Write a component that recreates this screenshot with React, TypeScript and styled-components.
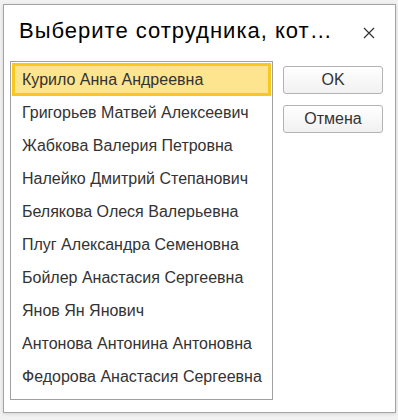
import React, { FC, useState } from 'react';
import styled, { createGlobalStyle } from 'styled-components';

const GlobalStyle = createGlobalStyle`
    html, body {
        margin: 0;
        padding: 0;
        background: #f2f2f2;
        font-family: Arial, "Liberation Sans", sans-serif;
    }
`;

const Page = styled.div`
    padding: 4px 3px;
`;

const Dialog = styled.div`
    box-sizing: border-box;
    width: 393px;
    height: 409px;
    background: #ffffff;
    border: 1px solid #a3a3a3;
    box-shadow: 0 1px 4px rgba(0, 0, 0, 0.12);
    display: flex;
    flex-direction: column;
`;

const Header = styled.div`
    height: 56px;
    display: flex;
    align-items: center;
    padding: 0 14px 5px 15px;
    box-sizing: border-box;
`;

const Title = styled.div`
    flex: 1;
    font-size: 22px;
    letter-spacing: 1px;
    color: #000;
    white-space: nowrap;
`;

const CloseButton = styled.button`
    width: 24px;
    height: 24px;
    border: none;
    background: transparent;
    padding: 0;
    margin: 5px 0 0 auto;
    display: flex;
    align-items: center;
    justify-content: center;
    cursor: pointer;
`;

const Body = styled.div`
    display: flex;
    align-items: flex-start;
    gap: 10px;
    padding: 0 0 0 6px;
`;

const List = styled.div`
    box-sizing: border-box;
    width: 263px;
    height: 339px;
    border: 1px solid #a0a0a0;
    padding: 1px;
    display: flex;
    flex-direction: column;
`;

const Row = styled.div<{ $selected?: boolean }>`
    box-sizing: border-box;
    height: 33px;
    flex-shrink: 0;
    display: flex;
    align-items: center;
    padding-left: ${(p) => (p.$selected ? '7px' : '10px')};
    font-size: 16px;
    color: #333333;
    white-space: nowrap;
    background: ${(p) => (p.$selected ? '#fde48f' : 'transparent')};
    border: ${(p) => (p.$selected ? '3px solid #f8c91c' : 'none')};
    cursor: default;
`;

const Buttons = styled.div`
    display: flex;
    flex-direction: column;
    gap: 11px;
    padding-top: 5px;
`;

const Button = styled.button`
    box-sizing: border-box;
    width: 100px;
    height: 28px;
    border: 1px solid #b3b3b3;
    border-radius: 3px;
    background: linear-gradient(#ffffff, #f1f1f1);
    font-family: Arial, "Liberation Sans", sans-serif;
    font-size: 16px;
    color: #333333;
    padding: 0;
    cursor: pointer;
`;

const employees = [
    'Курило Анна Андреевна',
    'Григорьев Матвей Алексеевич',
    'Жабкова Валерия Петровна',
    'Налейко Дмитрий Степанович',
    'Белякова Олеся Валерьевна',
    'Плуг Александра Семеновна',
    'Бойлер Анастасия Сергеевна',
    'Янов Ян Янович',
    'Антонова Антонина Антоновна',
    'Федорова Анастасия Сергеевна',
];

const App: FC = () => {
    const [selected, setSelected] = useState(0);

    return (
        <Page>
            <GlobalStyle />
            <Dialog>
                <Header>
                    <Title>Выберите сотрудника, кот…</Title>
                    <CloseButton aria-label="Закрыть">
                        <svg width="12" height="12" viewBox="0 0 12 12">
                            <path d="M1 1 L11 11 M11 1 L1 11" stroke="#333" strokeWidth="1.2" />
                        </svg>
                    </CloseButton>
                </Header>
                <Body>
                    <List>
                        {employees.map((name, i) => (
                            <Row key={name} $selected={i === selected} onClick={() => setSelected(i)}>
                                {name}
                            </Row>
                        ))}
                    </List>
                    <Buttons>
                        <Button>OK</Button>
                        <Button>Отмена</Button>
                    </Buttons>
                </Body>
            </Dialog>
        </Page>
    );
};

export default App;
